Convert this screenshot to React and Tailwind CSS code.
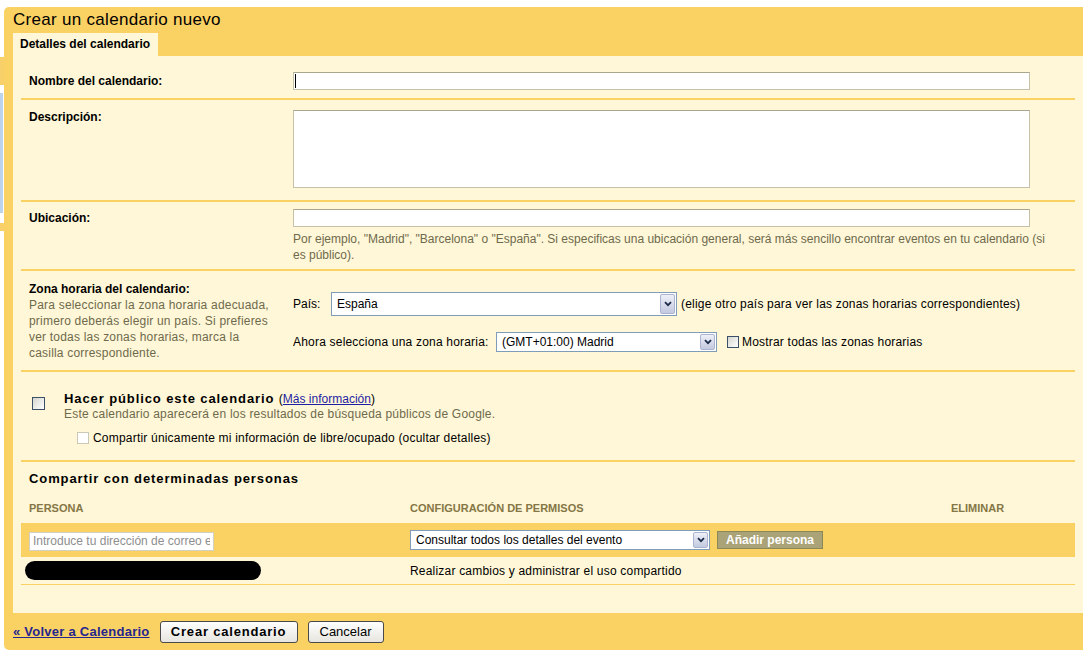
import React from "react";

function Chevron() {
  return (
    <svg width="8" height="6" viewBox="0 0 8 6">
      <path d="M1 1.2 L4 4.2 L7 1.2" fill="none" stroke="#1d2b4a" strokeWidth="1.8" />
    </svg>
  );
}

function Select({ w, h, text }) {
  return (
    <div
      className="flex shrink-0 items-stretch border border-[#7f9db9] bg-white"
      style={{ width: w, height: h }}
    >
      <div className="flex flex-1 items-center pl-[5px] text-[12px] leading-none text-black">{text}</div>
      <div className="m-px flex w-[15px] items-center justify-center rounded-[2px] border border-[#aab4d0] bg-gradient-to-b from-[#eef0f8] to-[#c3c9df]">
        <Chevron />
      </div>
    </div>
  );
}

function XpCheckbox({ size = 13, className = "" }) {
  return (
    <div
      className={"shrink-0 border border-[#3b4f66] bg-gradient-to-br from-[#d6d6cf] to-white " + className}
      style={{ width: size, height: size }}
    />
  );
}

export default function App() {
  const olive = "text-[#6e6a4d]";
  return (
    <div className="flex h-[654px] w-[1083px] overflow-hidden bg-white font-['Liberation_Sans',Arial,sans-serif] text-black">
      {/* left remnants of background page */}
      <div className="flex w-[4px] shrink-0 flex-col">
        <div className="h-[57px]" />
        <div className="h-[28px] bg-[#f8d06a]" />
        <div className="h-[8px]" />
        <div className="h-[120px] border-r border-white bg-[#bcd3ee]" />
        <div className="h-[10px]" />
        <div className="h-[8px] bg-[#f8d06a]" />
      </div>

      <div className="mt-[7px] flex h-[643px] flex-1 flex-col rounded-l-[5px] bg-[#fad163]">
        <div className="h-[26px] pl-[9px] text-[17px] leading-[26px] tracking-[0.3px]">Crear un calendario nuevo</div>
        <div className="flex h-[23px] pl-[9px]">
          <div className="w-[145px] bg-[#fff7d7] pl-[7px] text-[12px] font-bold leading-[23px]">Detalles del calendario</div>
        </div>

        <div className="ml-[9px] h-[557px] bg-[#fff7d7] px-[8px] pt-[8px]">
          {/* Nombre */}
          <div className="flex border-b-2 border-[#fad163] py-[8px] pl-[8px]">
            <div className="w-[264px] shrink-0 text-[12px] font-bold leading-[18px]">Nombre del calendario:</div>
            <div className="relative h-[18px] w-[737px] border border-[#c4c1a8] border-t-[#a9a68d] bg-white">
              <span className="absolute left-[1px] top-[1px] h-[14px] w-px bg-black" />
            </div>
          </div>

          {/* Descripción */}
          <div className="flex border-b-2 border-[#fad163] pb-[12px] pl-[8px] pt-[10px]">
            <div className="w-[264px] shrink-0 text-[12px] font-bold leading-[14px]">Descripción:</div>
            <div className="h-[78px] w-[737px] border border-[#c4c1a8] border-t-[#a9a68d] bg-white" />
          </div>

          {/* Ubicación */}
          <div className="flex border-b-2 border-[#fad163] pb-[6px] pl-[8px] pt-[7px]">
            <div className="w-[264px] shrink-0 text-[12px] font-bold leading-[18px]">Ubicación:</div>
            <div className="w-[737px]">
              <div className="h-[18px] w-[737px] border border-[#c4c1a8] border-t-[#a9a68d] bg-white" />
              <div className={"mt-[4px] whitespace-nowrap text-[12px] leading-[16px] " + olive}>
                Por ejemplo, "Madrid", "Barcelona" o "España". Si especificas una ubicación general, será más sencillo encontrar eventos en tu calendario (si
                <br />
                es público).
              </div>
            </div>
          </div>

          {/* Zona horaria */}
          <div className="flex border-b-2 border-[#fad163] pb-[9px] pl-[8px] pt-[10px]">
            <div className="w-[264px] shrink-0 text-[12px] leading-[16px]">
              <div className="font-bold">Zona horaria del calendario:</div>
              <div className={"tracking-[0.2px] " + olive}>
                Para seleccionar la zona horaria adecuada,
                <br />
                primero deberás elegir un país. Si prefieres
                <br />
                ver todas las zonas horarias, marca la
                <br />
                casilla correspondiente.
              </div>
            </div>
            <div className="mt-[11px] text-[12px]">
              <div className="flex h-[24px] items-center">
                <span className="w-[38px] shrink-0">País:</span>
                <Select w={346} h={24} text="España" />
                <span className="ml-[4px] whitespace-nowrap tracking-[0.2px]">(elige otro país para ver las zonas horarias correspondientes)</span>
              </div>
              <div className="mt-[16px] flex h-[20px] items-center">
                <span className="w-[203px] shrink-0 whitespace-nowrap tracking-[0.2px]">Ahora selecciona una zona horaria:</span>
                <Select w={221} h={20} text="(GMT+01:00) Madrid" />
                <XpCheckbox size={12} className="ml-[10px]" />
                <span className="ml-[3px] whitespace-nowrap tracking-[0.2px]">Mostrar todas las zonas horarias</span>
              </div>
            </div>
          </div>

          {/* Hacer público */}
          <div className="flex border-b-2 border-[#fad163] pb-[15px] pl-[11px] pt-[19px]">
            <XpCheckbox size={13} className="mt-[6px]" />
            <div className="ml-[19px]">
              <div className="whitespace-nowrap text-[13px] font-bold leading-[16px] tracking-[0.9px]">
                Hacer público este calendario{" "}
                <span className="text-[12px] font-normal tracking-normal">
                  (<a className="text-[#1f1fa3] underline">Más información</a>)
                </span>
              </div>
              <div className={"whitespace-nowrap text-[12px] leading-[14px] tracking-[0.2px] " + olive}>
                Este calendario aparecerá en los resultados de búsqueda públicos de Google.
              </div>
              <div className="ml-[13px] mt-[10px] flex items-center text-[12px] leading-[14px]">
                <div className="h-[12px] w-[12px] border border-[#cbc8b6] bg-white" />
                <span className="ml-[4px] whitespace-nowrap tracking-[0.2px]">Compartir únicamente mi información de libre/ocupado (ocultar detalles)</span>
              </div>
            </div>
          </div>

          {/* Compartir */}
          <div className="pt-[8px]">
            <div className="pl-[8px] text-[13px] font-bold leading-[18px] tracking-[0.9px]">Compartir con determinadas personas</div>
            <div className="mt-[13px] flex text-[11px] font-bold leading-[14px] text-[#857645]">
              <div className="w-[381px] pl-[8px]">PERSONA</div>
              <div className="w-[541px] pl-[8px]">CONFIGURACIÓN DE PERMISOS</div>
              <div className="pl-[8px]">ELIMINAR</div>
            </div>
            <div className="mt-[8px] flex h-[34px] items-center bg-[#fad163]">
              <div className="w-[381px] pl-[8px]">
                <input
                  readOnly
                  placeholder="Introduce tu dirección de correo electrónico"
                  className="h-[19px] w-[185px] border border-[#d2d0c2] bg-white px-[3px] text-[12px] outline-none placeholder:text-[#8e8e8e]"
                />
              </div>
              <div className="flex items-center pl-[8px]">
                <Select w={300} h={20} text="Consultar todos los detalles del evento" />
                <div className="ml-[7px] flex h-[18px] w-[106px] items-center justify-center border border-[#8c8759] bg-[#aaa377] text-[12px] font-bold text-white">
                  Añadir persona
                </div>
              </div>
            </div>
            <div className="flex h-[28px] items-center border-b border-[#fad163]">
              <div className="w-[381px] pl-[4px]">
                <div className="h-[19px] w-[236px] rounded-full bg-black" />
              </div>
              <div className="pl-[8px] text-[12px] tracking-[0.2px]">Realizar cambios y administrar el uso compartido</div>
            </div>
          </div>
        </div>

        <div className="flex h-[37px] items-center pl-[9px]">
          <a className="text-[13px] font-bold tracking-[0.25px] text-[#26268f] underline">« Volver a Calendario</a>
          <div className="ml-[10px] flex h-[22px] w-[138px] items-center justify-center rounded-[3px] border border-[#4a4a4a] bg-gradient-to-b from-white to-[#e6e5df] text-[13px] font-bold tracking-[0.8px]">
            Crear calendario
          </div>
          <div className="ml-[10px] flex h-[22px] w-[76px] items-center justify-center rounded-[3px] border border-[#4a4a4a] bg-gradient-to-b from-white to-[#e6e5df] text-[13px]">
            Cancelar
          </div>
        </div>
      </div>
    </div>
  );
}
